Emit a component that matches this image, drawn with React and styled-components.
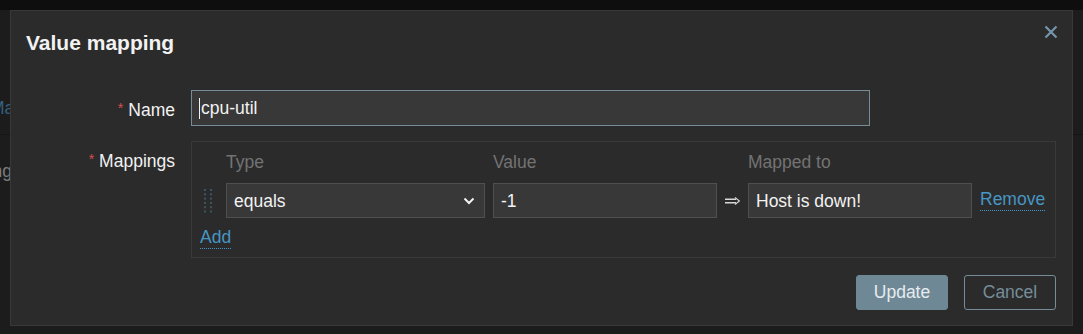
import React from 'react';
import styled, { createGlobalStyle } from 'styled-components';

const GlobalStyle = createGlobalStyle`
  body {
    margin: 0;
    background: #1c1c1c;
    font-family: "Liberation Sans", Arial, sans-serif;
  }
`;

const Page = styled.div`
  position: relative;
  width: 1083px;
  height: 334px;
  overflow: hidden;
  background: #1c1c1c;
`;

const TopBar = styled.div`
  height: 10px;
  background: #0e0e0e;
`;

const BgContent = styled.div`
  padding-top: 86px;
  font-size: 17.5px;
  line-height: 24px;
`;

const BgLine = styled.div`
  display: flex;
  justify-content: ${(p) => (p.$end ? 'flex-end' : 'flex-start')};
  width: 12px;
  margin-left: ${(p) => p.$shift || '0px'};
  white-space: nowrap;
  color: ${(p) => (p.$link ? '#35607e' : '#7c7c7c')};
`;

const BgDivider = styled.div`
  height: 14px;
  border-bottom: 1px solid #151515;
  margin-bottom: 24px;
`;

const Dialog = styled.div`
  position: absolute;
  left: 10px;
  top: 10px;
  width: 1063px;
  height: 316px;
  box-sizing: border-box;
  background: #2b2b2b;
  border: 1px solid #383838;
  padding: 17px 16px 15px 16px;
  display: flex;
  flex-direction: column;
  color: #f2f2f2;
`;

const Title = styled.h4`
  margin: 0 0 0 -1px;
  font-size: 21px;
  line-height: 30px;
  font-weight: bold;
  color: #f2f2f2;
`;

const CloseButton = styled.button`
  position: absolute;
  top: 14px;
  right: 14px;
  width: 14px;
  height: 14px;
  padding: 0;
  border: 0;
  background: none;
  display: flex;
  cursor: pointer;
`;

const Form = styled.div`
  margin-top: 32px;
  display: grid;
  grid-template-columns: 148px 1fr;
  column-gap: 16px;
  row-gap: 15px;
  align-items: start;
  font-size: 17.5px;
`;

const Label = styled.label`
  text-align: right;
  line-height: 24px;
  padding-top: 6px;
  color: #f2f2f2;
`;

const Required = styled.span`
  color: #d64e4e;
  font-size: 14px;
  margin-right: 5px;
  vertical-align: 3px;
`;

const TextBox = styled.div`
  box-sizing: border-box;
  width: ${(p) => p.$width || '100%'};
  height: ${(p) => p.$height || '35px'};
  display: flex;
  align-items: center;
  padding: 1px 8px 0 7px;
  background: #383838;
  border: 1px solid ${(p) => (p.$focused ? '#768d99' : '#4f4f4f')};
  color: #f2f2f2;
  font-size: 17.5px;
  white-space: nowrap;
`;

const Caret = styled.span`
  width: 1px;
  height: 21px;
  background: #f2f2f2;
  margin-right: 1px;
`;

const Chevron = styled.svg`
  margin-left: auto;
  margin-right: 1px;
`;

const MappingsBox = styled.div`
  border: 1px solid #393939;
  padding: 8px;
  display: flex;
  flex-direction: column;
`;

const MappingGrid = styled.div`
  display: grid;
  grid-template-columns: 18px 259px 224px 15px 224px auto;
  column-gap: 8px;
  row-gap: 9px;
  align-items: center;
`;

const ColHead = styled.div`
  line-height: 24px;
  color: #737373;
`;

const Handle = styled.svg`
  margin-left: 4px;
`;

const Arrow = styled.svg`
  display: block;
`;

const Link = styled.span`
  color: #4796c4;
  border-bottom: 1px dotted #4796c4;
  padding-bottom: 1px;
  cursor: pointer;
  justify-self: start;
  line-height: 19px;
`;

const AddRow = styled.div`
  margin-top: 7px;
  line-height: 24px;
`;

const Footer = styled.div`
  margin-top: auto;
  display: flex;
  justify-content: flex-end;
  gap: 16px;
`;

const Button = styled.button`
  width: 92px;
  height: 35px;
  box-sizing: border-box;
  border-radius: 3px;
  font-family: "Liberation Sans", Arial, sans-serif;
  font-size: 17.5px;
  cursor: pointer;
  background: ${(p) => (p.$alt ? 'transparent' : '#6f8896')};
  color: ${(p) => (p.$alt ? '#768d99' : '#e6ecef')};
  border: 1px solid ${(p) => (p.$alt ? '#768d99' : '#6f8896')};
`;

const dots = [];
for (let r = 0; r < 6; r++) {
  for (let c = 0; c < 2; c++) {
    dots.push(<rect key={`${r}-${c}`} x={c * 6} y={r * 4.3} width="2" height="2" fill="#3a5566" />);
  }
}

export default function App() {
  return (
    <Page>
      <GlobalStyle />
      <TopBar />
      <BgContent>
        <BgLine $link $shift="-10px">Mappings</BgLine>
        <BgDivider />
        <BgLine $end>Mapping</BgLine>
      </BgContent>

      <Dialog>
        <Title>Value mapping</Title>
        <CloseButton aria-label="Close">
          <svg width="14" height="14" viewBox="0 0 14 14">
            <path d="M1.5 1.5 L12.5 12.5 M12.5 1.5 L1.5 12.5" stroke="#7595ad" strokeWidth="2.2" />
          </svg>
        </CloseButton>

        <Form>
          <Label><Required>*</Required>Name</Label>
          <TextBox $width="679px" $height="36px" $focused>
            <Caret />cpu-util
          </TextBox>

          <Label><Required>*</Required>Mappings</Label>
          <MappingsBox>
            <MappingGrid>
              <ColHead />
              <ColHead>Type</ColHead>
              <ColHead>Value</ColHead>
              <ColHead />
              <ColHead>Mapped to</ColHead>
              <ColHead />

              <Handle width="8" height="24" viewBox="0 0 8 24">{dots}</Handle>
              <TextBox>
                equals
                <Chevron width="12" height="8" viewBox="0 0 12 8">
                  <path d="M1.5 1.5 L6 6 L10.5 1.5" stroke="#f2f2f2" strokeWidth="2" fill="none" />
                </Chevron>
              </TextBox>
              <TextBox>-1</TextBox>
              <Arrow width="15" height="8" viewBox="0 0 15 8">
                <path d="M0 2.2 H11 M0 5.8 H11" stroke="#d8d8d8" strokeWidth="1.4" />
                <path d="M10 0.5 L14.5 4 L10 7.5" stroke="#d8d8d8" strokeWidth="1.2" fill="none" />
              </Arrow>
              <TextBox>Host is down!</TextBox>
              <Link>Remove</Link>
            </MappingGrid>
            <AddRow>
              <Link>Add</Link>
            </AddRow>
          </MappingsBox>
        </Form>

        <Footer>
          <Button>Update</Button>
          <Button $alt>Cancel</Button>
        </Footer>
      </Dialog>
    </Page>
  );
}
